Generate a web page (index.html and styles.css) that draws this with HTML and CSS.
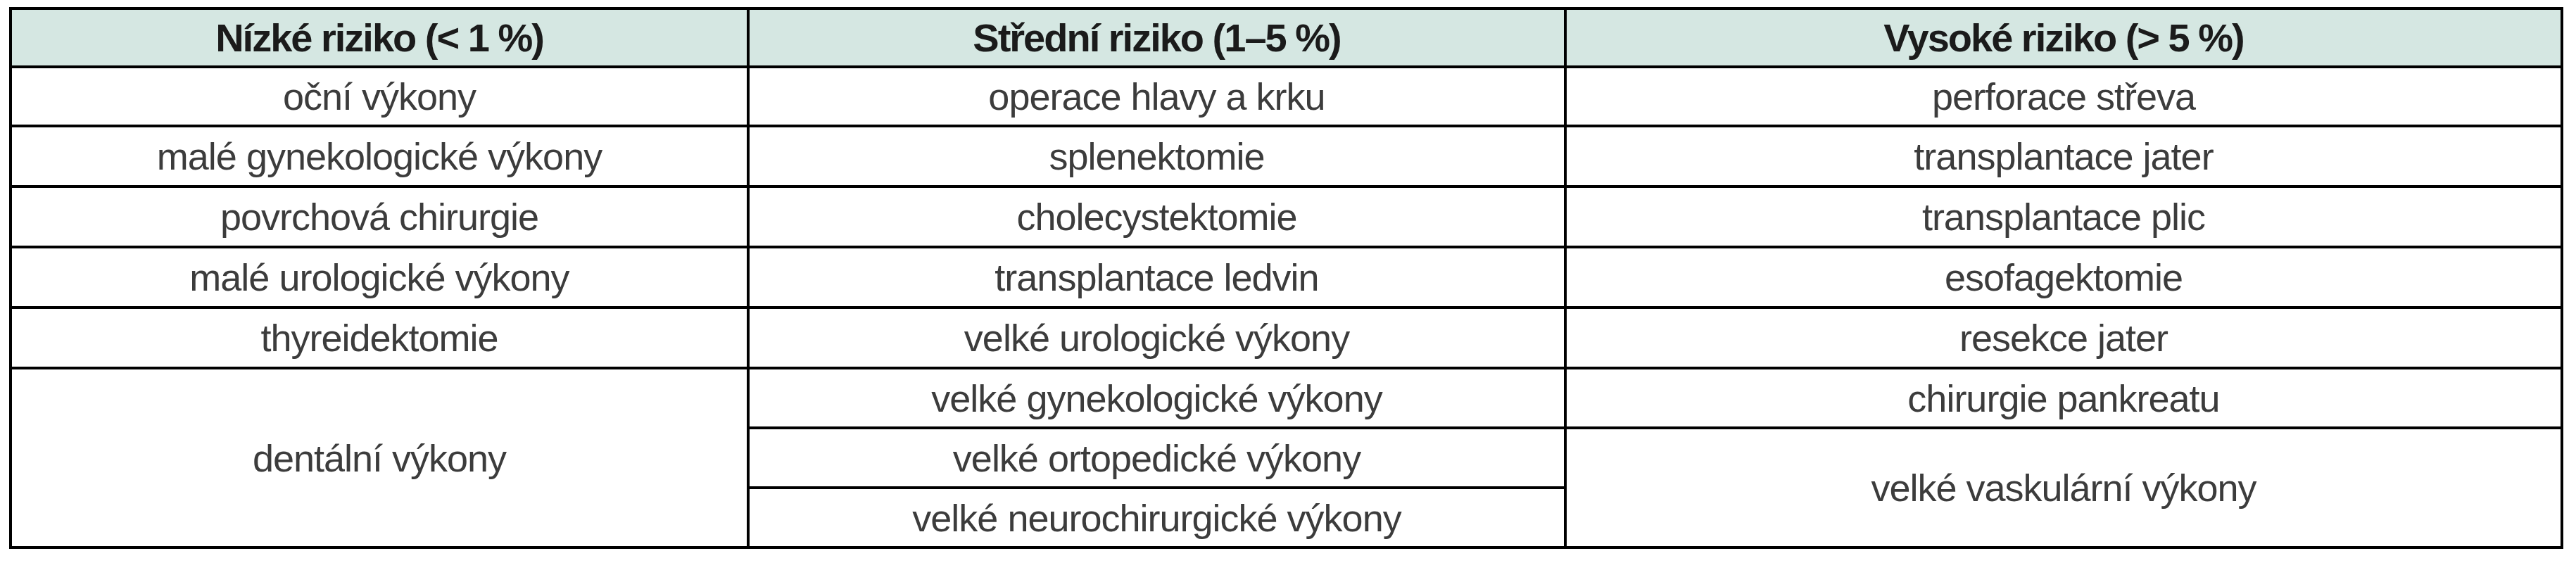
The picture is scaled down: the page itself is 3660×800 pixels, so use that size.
FILE: index.html
```html
<!DOCTYPE html>
<html lang="cs">
<head>
<meta charset="utf-8">
<title>Riziko</title>
<link rel="stylesheet" href="styles.css">
</head>
<body>
<table class="risk">
  <colgroup>
    <col class="c1">
    <col class="c2">
    <col class="c3">
  </colgroup>
  <thead>
    <tr class="r-head">
      <th>Nízké riziko (&lt; 1 %)</th>
      <th>Střední riziko (1–5 %)</th>
      <th>Vysoké riziko (&gt; 5 %)</th>
    </tr>
  </thead>
  <tbody>
    <tr class="r1">
      <td>oční výkony</td>
      <td>operace hlavy a krku</td>
      <td>perforace střeva</td>
    </tr>
    <tr class="r2">
      <td>malé gynekologické výkony</td>
      <td>splenektomie</td>
      <td>transplantace jater</td>
    </tr>
    <tr class="r2">
      <td>povrchová chirurgie</td>
      <td>cholecystektomie</td>
      <td>transplantace plic</td>
    </tr>
    <tr class="r2">
      <td>malé urologické výkony</td>
      <td>transplantace ledvin</td>
      <td>esofagektomie</td>
    </tr>
    <tr class="r2">
      <td>thyreidektomie</td>
      <td>velké urologické výkony</td>
      <td>resekce jater</td>
    </tr>
    <tr class="r3">
      <td rowspan="3">dentální výkony</td>
      <td>velké gynekologické výkony</td>
      <td>chirurgie pankreatu</td>
    </tr>
    <tr class="r3">
      <td>velké ortopedické výkony</td>
      <td rowspan="2">velké vaskulární výkony</td>
    </tr>
    <tr class="r3">
      <td>velké neurochirurgické výkony</td>
    </tr>
  </tbody>
</table>
</body>
</html>
```
FILE: styles.css
```css
html, body {
  margin: 0;
  padding: 0;
  background: #ffffff;
}

.risk {
  margin: 10px 0 0 13px;
  border-collapse: separate;
  border-spacing: 0;
  table-layout: fixed;
  width: 3629px;
  border-top: 4px solid #000;
  border-left: 4px solid #000;
  font-family: "Liberation Sans", Arial, sans-serif;
}

.c1 { width: 1048px; }
.c2 { width: 1161px; }
.c3 { width: 1416px; }

.risk th,
.risk td {
  box-sizing: border-box;
  padding: 0;
  border-right: 4px solid #000;
  border-bottom: 4px solid #000;
  text-align: center;
  vertical-align: middle;
}

.risk th {
  background: #d5e7e2;
  color: #1b1b1b;
  font-size: 56px;
  font-weight: 700;
  letter-spacing: -2px;
}

.risk td {
  color: #3c3c3c;
  font-size: 54px;
  font-weight: 400;
  letter-spacing: -1px;
}

.r-head { height: 83px; }
.r1 { height: 84px; }
.r2 { height: 86px; }
.r3 { height: 85px; }
```
